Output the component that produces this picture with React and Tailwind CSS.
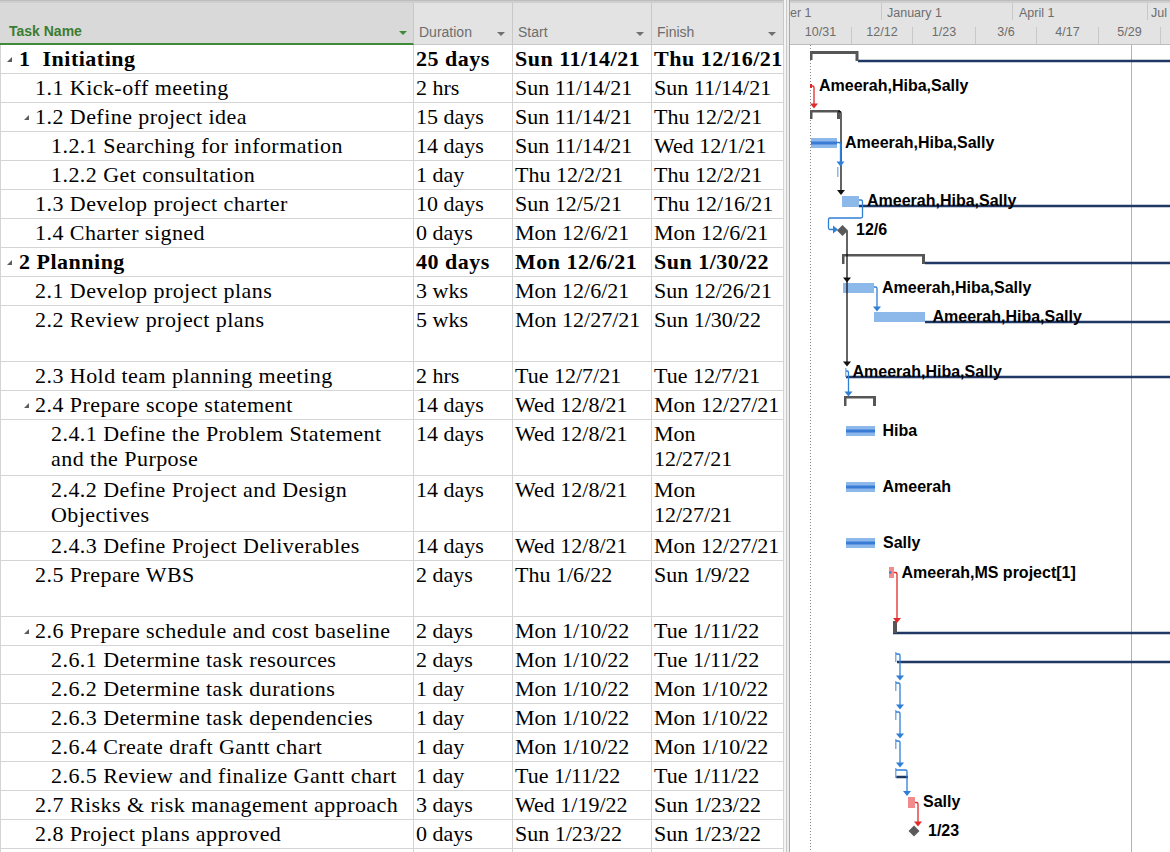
import React from "react";

const rows = [
  { n: ["1  Initiating"], k: "s1", b: true, d: "25 days", s: "Sun 11/14/21", f: ["Thu 12/16/21"] },
  { n: ["1.1 Kick-off meeting"], k: "t2", d: "2 hrs", s: "Sun 11/14/21", f: ["Sun 11/14/21"] },
  { n: ["1.2 Define project idea"], k: "s2", d: "15 days", s: "Sun 11/14/21", f: ["Thu 12/2/21"] },
  { n: ["1.2.1 Searching for information"], k: "t3", d: "14 days", s: "Sun 11/14/21", f: ["Wed 12/1/21"] },
  { n: ["1.2.2 Get consultation"], k: "t3", d: "1 day", s: "Thu 12/2/21", f: ["Thu 12/2/21"] },
  { n: ["1.3 Develop project charter"], k: "t2", d: "10 days", s: "Sun 12/5/21", f: ["Thu 12/16/21"] },
  { n: ["1.4 Charter signed"], k: "t2", d: "0 days", s: "Mon 12/6/21", f: ["Mon 12/6/21"] },
  { n: ["2 Planning"], k: "s1", b: true, d: "40 days", s: "Mon 12/6/21", f: ["Sun 1/30/22"] },
  { n: ["2.1 Develop project plans"], k: "t2", d: "3 wks", s: "Mon 12/6/21", f: ["Sun 12/26/21"] },
  { n: ["2.2 Review project plans"], k: "t2", tall: true, d: "5 wks", s: "Mon 12/27/21", f: ["Sun 1/30/22"] },
  { n: ["2.3 Hold team planning meeting"], k: "t2", d: "2 hrs", s: "Tue 12/7/21", f: ["Tue 12/7/21"] },
  { n: ["2.4 Prepare scope statement"], k: "s2", d: "14 days", s: "Wed 12/8/21", f: ["Mon 12/27/21"] },
  { n: ["2.4.1 Define the Problem Statement", "and the Purpose"], k: "t3", tall: true, d: "14 days", s: "Wed 12/8/21", f: ["Mon", "12/27/21"] },
  { n: ["2.4.2 Define Project and Design", "Objectives"], k: "t3", tall: true, d: "14 days", s: "Wed 12/8/21", f: ["Mon", "12/27/21"] },
  { n: ["2.4.3 Define Project Deliverables"], k: "t3", d: "14 days", s: "Wed 12/8/21", f: ["Mon 12/27/21"] },
  { n: ["2.5 Prepare WBS"], k: "t2", tall: true, d: "2 days", s: "Thu 1/6/22", f: ["Sun 1/9/22"] },
  { n: ["2.6 Prepare schedule and cost baseline"], k: "s2", d: "2 days", s: "Mon 1/10/22", f: ["Tue 1/11/22"] },
  { n: ["2.6.1 Determine task resources"], k: "t3", d: "2 days", s: "Mon 1/10/22", f: ["Tue 1/11/22"] },
  { n: ["2.6.2 Determine task durations"], k: "t3", d: "1 day", s: "Mon 1/10/22", f: ["Mon 1/10/22"] },
  { n: ["2.6.3 Determine task dependencies"], k: "t3", d: "1 day", s: "Mon 1/10/22", f: ["Mon 1/10/22"] },
  { n: ["2.6.4 Create draft Gantt chart"], k: "t3", d: "1 day", s: "Mon 1/10/22", f: ["Mon 1/10/22"] },
  { n: ["2.6.5 Review and finalize Gantt chart"], k: "t3", d: "1 day", s: "Tue 1/11/22", f: ["Tue 1/11/22"] },
  { n: ["2.7 Risks & risk management approach"], k: "t2", d: "3 days", s: "Wed 1/19/22", f: ["Sun 1/23/22"] },
  { n: ["2.8 Project plans approved"], k: "t2", d: "0 days", s: "Sun 1/23/22", f: ["Sun 1/23/22"] },
];

const PAD = { s1: "pl-[6px]", s2: "pl-[23px]", t2: "pl-[34px]", t3: "pl-[50px]" };
const GAP = { s1: "ml-[7px]", s2: "ml-[6px]", t2: "", t3: "" };

function Tri() {
  return (
    <svg width="5" height="5" viewBox="0 0 5 5" className="mt-[11px] shrink-0">
      <polygon points="5,0 5,5 0,5" fill="#5c5c5c" />
    </svg>
  );
}

function Row({ r }) {
  const h = r.tall ? "h-[56px]" : "h-[29px]";
  const wt = r.b ? "font-bold tracking-[0.5px]" : "";
  return (
    <div className={`flex shrink-0 ${h} border-b border-[#d4d4d4]`}>
      <div className={`w-[414px] shrink-0 border-l border-r border-[#d4d4d4] flex items-start pt-[1px] overflow-hidden ${PAD[r.k]}`}>
        {(r.k === "s1" || r.k === "s2") && <Tri />}
        <div className={`${GAP[r.k]} ${r.b ? "font-bold tracking-[0.5px]" : "tracking-[0.45px]"}`}>
          {r.n.map((l, i) => (
            <div key={i} className="whitespace-pre">{l}</div>
          ))}
        </div>
      </div>
      <div className={`w-[99px] shrink-0 border-r border-[#d4d4d4] pl-[2px] pt-[1px] whitespace-nowrap overflow-hidden ${wt}`}>{r.d}</div>
      <div className={`w-[139px] shrink-0 border-r border-[#d4d4d4] pl-[2px] pt-[1px] whitespace-nowrap overflow-hidden ${wt}`}>{r.s}</div>
      <div className={`w-[132px] shrink-0 border-r border-[#d4d4d4] pl-[2px] pt-[1px] whitespace-nowrap overflow-hidden ${wt}`}>
        {r.f.map((l, i) => (
          <div key={i}>{l}</div>
        ))}
      </div>
    </div>
  );
}

function HArrow({ c }) {
  return (
    <svg width="8" height="4" viewBox="0 0 8 4" className="mb-[4px] shrink-0">
      <polygon points="0,0 8,0 4,4" fill={c} />
    </svg>
  );
}

const LB = "#8cb8ea";
const DB = "#3a7bd5";
const BL = "#2f7fd6";
const RD = "#e12a2a";
const PK = "#f28b8b";
const NV = "#1f3864";
const GR = "#565656";

function Arr({ x, y, c }) {
  return <polygon points={`${x - 4},${y - 5} ${x + 4},${y - 5} ${x},${y}`} fill={c} />;
}
function Dia({ x, y }) {
  const r = 5.5;
  return <polygon points={`${x},${y - r} ${x + r},${y} ${x},${y + r} ${x - r},${y}`} fill="#5a5a5a" />;
}
function Lbl({ x, y, t }) {
  return (
    <text x={x} y={y + 5.5} fontFamily="'Liberation Sans', Arial, sans-serif" fontWeight="bold" fontSize="16" fill="#000">
      {t}
    </text>
  );
}

function Gantt() {
  const sub = [0, 1, 2, 3];
  return (
    <svg width="380" height="807" viewBox="790 45 380 807" className="block">
      <line x1="810.5" y1="45" x2="810.5" y2="852" stroke="#8a8a8a" strokeWidth="1" strokeDasharray="1 2" />
      <line x1="1131.5" y1="45" x2="1131.5" y2="852" stroke="#9cc49c" strokeWidth="1" />

      <g stroke={NV} strokeWidth="2.5">
        <line x1="858" y1="61" x2="1170" y2="61" />
        <line x1="859" y1="206" x2="1170" y2="206" />
        <line x1="925" y1="263" x2="1170" y2="263" />
        <line x1="925" y1="322" x2="1170" y2="322" />
        <line x1="846" y1="377" x2="1170" y2="377" />
        <line x1="893" y1="633" x2="1170" y2="633" />
        <line x1="897" y1="662" x2="1170" y2="662" />
        <line x1="896" y1="777" x2="908" y2="777" />
      </g>

      <g fill={GR}>
        <rect x="810" y="51" width="48" height="3" />
        <rect x="810" y="51" width="2.5" height="9" />
        <rect x="855.5" y="51" width="3" height="10" />
        <rect x="810" y="110" width="30" height="2.5" />
        <rect x="810" y="110" width="2.5" height="9" />
        <rect x="837" y="110" width="3" height="9" />
        <rect x="842" y="254" width="83" height="2.5" />
        <rect x="842" y="254" width="2.5" height="10" />
        <rect x="922" y="254" width="3" height="10" />
        <rect x="844" y="396" width="32" height="2.5" />
        <rect x="844" y="396" width="2.5" height="10" />
        <rect x="873" y="396" width="3" height="10" />
        <rect x="893" y="621" width="4" height="12" />
      </g>

      <rect x="810" y="84" width="2" height="4" fill={RD} />
      <rect x="811" y="138" width="26" height="10" fill={LB} />
      <rect x="811" y="141.5" width="26" height="3" fill={DB} />
      <rect x="837" y="167" width="1.5" height="10" fill={LB} />
      <rect x="842" y="196" width="17" height="11" fill={LB} />
      <rect x="843" y="283" width="31" height="10" fill={LB} />
      <rect x="874" y="312" width="51" height="10" fill={LB} />
      <rect x="845" y="368" width="1.5" height="9" fill={LB} />
      {[426, 482, 538].map((y) => (
        <g key={y}>
          <rect x="846" y={y} width="29" height="10" fill={LB} />
          <rect x="846" y={y + 3.5} width="29" height="3" fill={DB} />
        </g>
      ))}
      <rect x="889" y="567" width="5" height="11" fill={PK} />
      <rect x="889" y="571.5" width="2.5" height="2" fill={DB} />
      {[646, 675, 704, 733, 762].map((t) => (
        <rect key={t} x="895" y={t + 6} width="1.5" height="10" fill="#7eb0e8" />
      ))}
      <rect x="908" y="797" width="7" height="11" fill={PK} />

      <g fill="none" strokeWidth="1.3">
        <path d="M811 86 H812.5 Q814 86 814 87.5 V104" stroke={RD} />
        <path d="M838 111.5 H839.5 Q841 111.5 841 113 V190" stroke="#111" />
        <path d="M837 142.5 H839 Q840.5 142.5 840.5 144 V162" stroke={BL} />
        <path d="M859 200 H861 Q862.5 200 862.5 201.5 V216.5 Q862.5 218 861 218 H830 Q828.5 218 828.5 219.5 V228 Q828.5 229.5 830 229.5 H834" stroke={BL} />
        <path d="M847 231 V362" stroke="#111" />
        <path d="M874 287 H875.5 Q877 287 877 288.5 V307" stroke={BL} />
        <path d="M846 371 H847 Q848.5 371 848.5 372.5 V392" stroke={BL} />
        <path d="M894 572.5 H895.5 Q897 572.5 897 574 V618" stroke={RD} />
        {sub.map((i) => {
          const t = 646 + 29 * i;
          return <path key={i} d={`M896 ${t + 8} H898.5 Q900 ${t + 8} 900 ${t + 9.5} V${t + 30}`} stroke={BL} />;
        })}
        <path d="M896 770 H905.5 Q907 770 907 771.5 V791.5" stroke={BL} />
        <path d="M915 802.5 H916.5 Q918 802.5 918 804 V822" stroke={RD} />
      </g>
      <Arr x={814} y={108.5} c={RD} />
      <Arr x={841} y={195} c="#111" />
      <Arr x={840.5} y={166.5} c={BL} />
      <polygon points="833,225.5 833,233.5 838,229.5" fill={BL} />
      <Arr x={847} y={282.5} c="#111" />
      <Arr x={847} y={366.5} c="#111" />
      <Arr x={877} y={311.5} c={BL} />
      <Arr x={848.5} y={396.5} c={BL} />
      <Arr x={897} y={623} c={RD} />
      {sub.map((i) => (
        <Arr key={i} x={900} y={646 + 29 * i + 34.5} c={BL} />
      ))}
      <Arr x={907} y={796} c={BL} />
      <Arr x={918} y={826.5} c={RD} />

      <Dia x={842.5} y={230.5} />
      <Dia x={914} y={831} />

      <Lbl x={819} y={85} t="Ameerah,Hiba,Sally" />
      <Lbl x={845} y={142.5} t="Ameerah,Hiba,Sally" />
      <Lbl x={867} y={200} t="Ameerah,Hiba,Sally" />
      <Lbl x={856} y={229.5} t="12/6" />
      <Lbl x={882} y={287.5} t="Ameerah,Hiba,Sally" />
      <Lbl x={932.5} y={316} t="Ameerah,Hiba,Sally" />
      <Lbl x={852.5} y={371.5} t="Ameerah,Hiba,Sally" />
      <Lbl x={882.5} y={430.5} t="Hiba" />
      <Lbl x={882.5} y={486.5} t="Ameerah" />
      <Lbl x={883} y={542.5} t="Sally" />
      <Lbl x={901.5} y={572} t="Ameerah,MS project[1]" />
      <Lbl x={923} y={801.5} t="Sally" />
      <Lbl x={928} y={830} t="1/23" />
    </svg>
  );
}

export default function App() {
  const sans = "font-['Liberation_Sans',Arial,sans-serif]";
  return (
    <div className="w-[1170px] h-[852px] overflow-hidden bg-white flex">
      <div className="w-[784px] shrink-0 flex flex-col">
        <div className="h-[45px] shrink-0 flex flex-col">
          <div className="h-[1px] bg-[#bdbdbd]" />
          <div className="h-[2px] bg-[#cfcfcf]" />
          <div className={`flex h-[42px] text-[14px] leading-[16px] ${sans}`}>
            <div className="w-[414px] shrink-0 bg-[#d9d9d9] border-r border-[#c8c8c8] border-b-2 border-b-[#3e8a36] flex items-end justify-between pl-[9px] pr-[6px] pb-[4px]">
              <span className="font-bold text-[#3a7d32]">Task Name</span>
              <HArrow c="#3e8a36" />
            </div>
            <div className="w-[99px] shrink-0 bg-[#e3e3e3] border-r border-b border-[#c8c8c8] flex items-end justify-between pl-[5px] pr-[7px] pb-[4px]">
              <span className="text-[#6d6d6d]">Duration</span>
              <HArrow c="#707070" />
            </div>
            <div className="w-[139px] shrink-0 bg-[#e3e3e3] border-r border-b border-[#c8c8c8] flex items-end justify-between pl-[5px] pr-[7px] pb-[4px]">
              <span className="text-[#6d6d6d]">Start</span>
              <HArrow c="#707070" />
            </div>
            <div className="w-[132px] shrink-0 bg-[#e3e3e3] border-r border-b border-[#c8c8c8] flex items-end justify-between pl-[5px] pr-[7px] pb-[4px]">
              <span className="text-[#6d6d6d]">Finish</span>
              <HArrow c="#707070" />
            </div>
          </div>
        </div>
        <div className="flex flex-col text-[22px] leading-[25px] text-black font-['Liberation_Serif','Times_New_Roman',serif]">
          {rows.map((r, i) => (
            <Row key={i} r={r} />
          ))}
          <div className="flex shrink-0 h-[29px] border-b border-[#d4d4d4]">
            <div className="w-[414px] shrink-0 border-l border-r border-[#d4d4d4]" />
            <div className="w-[99px] shrink-0 border-r border-[#d4d4d4]" />
            <div className="w-[139px] shrink-0 border-r border-[#d4d4d4]" />
            <div className="w-[132px] shrink-0 border-r border-[#d4d4d4]" />
          </div>
        </div>
      </div>

      <div className="w-[6px] shrink-0 flex">
        <div className="w-[2px] bg-[#f4f4f4]" />
        <div className="w-[1px] bg-[#c8c8c8]" />
        <div className="w-[2px] bg-[#ececec]" />
        <div className="w-[1px] bg-[#a8a8a8]" />
      </div>

      <div className="flex-1 min-w-0 flex flex-col overflow-hidden">
        <div className={`h-[45px] shrink-0 flex flex-col bg-[#e3e3e3] border-b border-[#bcbcbc] text-[12.5px] text-[#6d6d6d] ${sans}`}>
          <div className="h-[1px] bg-[#bdbdbd]" />
          <div className="h-[2px] bg-[#cfcfcf]" />
          <div className="h-[17px] flex leading-[17px] whitespace-nowrap">
            <div className="w-[92px] shrink-0 border-r border-[#c8c8c8] pt-[2px] overflow-hidden">er 1</div>
            <div className="w-[131px] shrink-0 border-r border-[#c8c8c8] pl-[5px] pt-[2px]">January 1</div>
            <div className="w-[135px] shrink-0 border-r border-[#c8c8c8] pl-[6px] pt-[2px]">April 1</div>
            <div className="flex-1 pl-[3px] pt-[2px] overflow-hidden">Jul</div>
          </div>
          <div className="h-[7px]" />
          <div className="h-[17px] flex whitespace-nowrap">
            {[
              ["10/31", "w-[62px]"],
              ["12/12", "w-[61px]"],
              ["1/23", "w-[63px]"],
              ["3/6", "w-[61px]"],
              ["4/17", "w-[62px]"],
              ["5/29", "w-[62px]"],
            ].map(([t, w]) => (
              <div key={t} className={`${w} shrink-0 border-r border-[#c8c8c8] flex justify-center items-start`}>
                <span className="leading-[15px] -mt-[2px]">{t}</span>
              </div>
            ))}
            <div className="flex-1" />
          </div>
        </div>
        <div className="flex-1 bg-white">
          <Gantt />
        </div>
      </div>
    </div>
  );
}
